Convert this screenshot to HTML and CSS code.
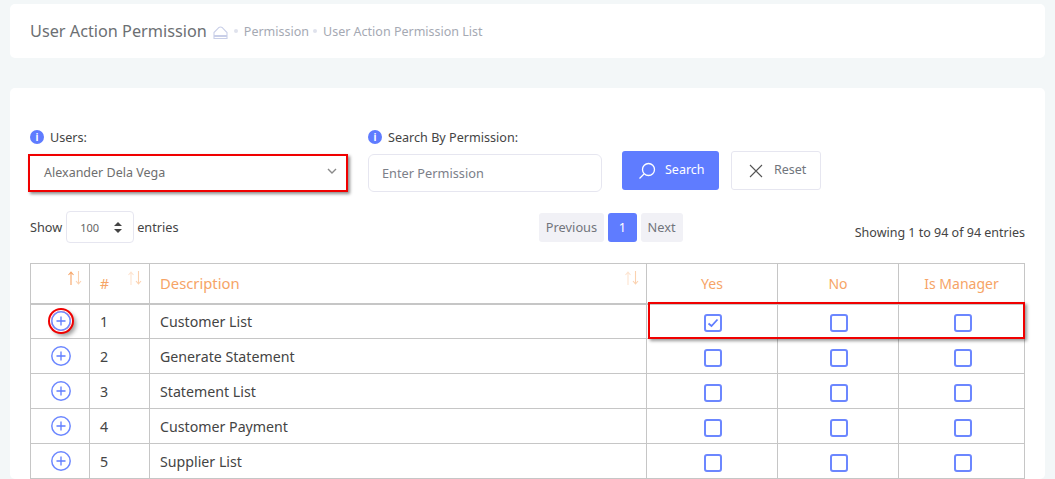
FILE: index.html
```html
<!DOCTYPE html>
<html>
<head>
  <title>User Action Permission</title>
  <link rel="stylesheet" href="styles.css">
</head>
<body>
  <div class="page-title">
    <h1>User Action Permission</h1>
    <svg class="home-icon" width="15" height="13" viewBox="0 0 15 13"><path d="M1 6.5 L5.5 1.8 Q7.5 0.2 9.5 1.8 L14 6.5 V12.5 H1 Z" fill="none" stroke="#c9cfe8" stroke-width="1.1"/><path d="M1 10 H14" stroke="#c9cfe8" stroke-width="2"/></svg>
    <span class="crumb">Permission</span>
    <span class="crumb">User Action Permission List</span>
  </div>

  <div class="card">
    <div class="filters">
      <div class="field field-users">
        <label><span class="info">i</span>Users:</label>
        <div class="select-box marked"><span class="select-text">Alexander Dela Vega</span>
          <svg class="chevron" width="10" height="6" viewBox="0 0 10 6"><path d="M1 1 L5 5 L9 1" fill="none" stroke="#8a8a8a" stroke-width="1.4"/></svg>
        </div>
      </div>
      <div class="field field-search">
        <label><span class="info">i</span>Search By Permission:</label>
        <div class="input-box">Enter Permission</div>
      </div>
      <div class="btn btn-primary">
        <svg width="18" height="18" viewBox="0 0 18 18"><circle cx="10.5" cy="7.5" r="6" fill="none" stroke="#fff" stroke-width="1.3"/><path d="M6 12 L1.5 16.5" stroke="#fff" stroke-width="1.3"/></svg>
        <span class="btn-text">Search</span>
      </div>
      <div class="btn btn-reset">
        <svg width="14" height="14" viewBox="0 0 14 14"><path d="M1 1 L13 13 M13 1 L1 13" stroke="#555" stroke-width="1.1"/></svg>
        <span class="btn-text">Reset</span>
      </div>
    </div>

    <div class="table-top">
      <div class="length">Show <span class="length-select">100
        <svg width="8" height="11" viewBox="0 0 8 11"><path d="M4 0 L8 4 H0 Z M4 11 L0 7 H8 Z" fill="#444"/></svg></span> entries</div>
      <div class="pager">
        <span class="page-btn">Previous</span>
        <span class="page-btn current">1</span>
        <span class="page-btn">Next</span>
      </div>
      <div class="showing">Showing 1 to 94 of 94 entries</div>
    </div>

    <div class="table-wrap">
      <table>
        <thead>
          <tr>
            <th class="col-expand">
              <svg class="sort" width="14" height="14" viewBox="0 0 14 14"><path d="M3 14 V1 M0.5 4 L3 1 L5.500 4" fill="none" stroke="#f6a466" stroke-width="1.1"/><path d="M10.500 0 V13 M8 10 L10.500 13 L13 10" fill="none" stroke="#fbd2b0" stroke-width="1.1"/></svg>
            </th>
            <th class="col-num">#
              <svg class="sort" width="14" height="14" viewBox="0 0 14 14"><path d="M3 14 V1 M0.5 4 L3 1 L5.500 4" fill="none" stroke="#fde4d0" stroke-width="1.1"/><path d="M10.500 0 V13 M8 10 L10.500 13 L13 10" fill="none" stroke="#fbd2b0" stroke-width="1.1"/></svg>
            </th>
            <th class="col-desc">Description
              <svg class="sort" width="14" height="14" viewBox="0 0 14 14"><path d="M3 14 V1 M0.5 4 L3 1 L5.500 4" fill="none" stroke="#fde4d0" stroke-width="1.1"/><path d="M10.500 0 V13 M8 10 L10.500 13 L13 10" fill="none" stroke="#fbd2b0" stroke-width="1.1"/></svg>
            </th>
            <th class="col-check center">Yes</th>
            <th class="col-no center">No</th>
            <th class="center">Is Manager</th>
          </tr>
        </thead>
        <tbody>
          <tr>
            <td class="center"><span class="plus plus-marked"><svg width="20" height="20" viewBox="0 0 20 20"><circle cx="10" cy="10" r="9.2" fill="none" stroke="#6c87ff" stroke-width="1.5"/><path d="M10 5.500 V14.500 M5.500 10 H14.500" stroke="#5f7cff" stroke-width="1.3"/></svg></span></td>
            <td>1</td><td>Customer List</td>
            <td class="center"><span class="check"><svg width="12" height="10" viewBox="0 0 12 10"><path d="M1.500 5.500 L4.500 8 L10.500 1.500" fill="none" stroke="#5f7cff" stroke-width="1.8"/></svg></span></td>
            <td class="center"><span class="check"></span></td>
            <td class="center"><span class="check"></span></td>
          </tr>
          <tr>
            <td class="center"><span class="plus"><svg width="20" height="20" viewBox="0 0 20 20"><circle cx="10" cy="10" r="9.2" fill="none" stroke="#6c87ff" stroke-width="1.5"/><path d="M10 5.500 V14.500 M5.500 10 H14.500" stroke="#5f7cff" stroke-width="1.3"/></svg></span></td>
            <td>2</td><td>Generate Statement</td>
            <td class="center"><span class="check"></span></td>
            <td class="center"><span class="check"></span></td>
            <td class="center"><span class="check"></span></td>
          </tr>
          <tr>
            <td class="center"><span class="plus"><svg width="20" height="20" viewBox="0 0 20 20"><circle cx="10" cy="10" r="9.2" fill="none" stroke="#6c87ff" stroke-width="1.5"/><path d="M10 5.500 V14.500 M5.500 10 H14.500" stroke="#5f7cff" stroke-width="1.3"/></svg></span></td>
            <td>3</td><td>Statement List</td>
            <td class="center"><span class="check"></span></td>
            <td class="center"><span class="check"></span></td>
            <td class="center"><span class="check"></span></td>
          </tr>
          <tr>
            <td class="center"><span class="plus"><svg width="20" height="20" viewBox="0 0 20 20"><circle cx="10" cy="10" r="9.2" fill="none" stroke="#6c87ff" stroke-width="1.5"/><path d="M10 5.500 V14.500 M5.500 10 H14.500" stroke="#5f7cff" stroke-width="1.3"/></svg></span></td>
            <td>4</td><td>Customer Payment</td>
            <td class="center"><span class="check"></span></td>
            <td class="center"><span class="check"></span></td>
            <td class="center"><span class="check"></span></td>
          </tr>
          <tr>
            <td class="center"><span class="plus"><svg width="20" height="20" viewBox="0 0 20 20"><circle cx="10" cy="10" r="9.2" fill="none" stroke="#6c87ff" stroke-width="1.5"/><path d="M10 5.500 V14.500 M5.500 10 H14.500" stroke="#5f7cff" stroke-width="1.3"/></svg></span></td>
            <td>5</td><td>Supplier List</td>
            <td class="center"><span class="check"></span></td>
            <td class="center"><span class="check"></span></td>
            <td class="center"><span class="check"></span></td>
          </tr>
        </tbody>
      </table>
      <div class="row-mark"></div>
    </div>
  </div>
</body>
</html>
```

FILE: styles.css
```css
html, body {
  height: 479px;
  overflow: hidden;
}
body {
  margin: 0;
  padding: 4px 10px 0;
  box-sizing: border-box;
  background-color: #f3f7f8;
  font-family: "Noto Sans", Arial, sans-serif;
  font-size: 13px;
  color: #444;
}
.page-title {
  height: 54px;
  background: #fff;
  border-radius: 5px;
  padding-left: 20px;
  display: flex;
  align-items: center;
}
.page-title h1 {
  margin: 0;
  font-size: 16.25px;
  font-weight: 400;
  color: #6c6f73;
}
.home-icon {
  margin-left: 6px;
  margin-top: 2px;
}
.crumb {
  font-size: 12.500px;
  color: #a5a9b3;
  margin-left: 6px;
  display: flex;
  align-items: center;
}
.crumb::before {
  content: "";
  width: 4px;
  height: 4px;
  border-radius: 50%;
  background: #dfe2ec;
  margin-right: 6px;
}
.crumb + .crumb {
  margin-left: 4px;
}
.card {
  margin-top: 30px;
  background: #fff;
  border-radius: 5px;
  padding: 40px 20px 0;
  height: 391px;
  box-sizing: border-box;
  overflow: hidden;
}
.filters {
  display: flex;
  align-items: flex-start;
}
.field label {
  display: flex;
  align-items: center;
  height: 18px;
  margin-bottom: 8px;
  font-size: 12.6px;
  color: #444;
}
.info {
  width: 14px;
  height: 14px;
  border-radius: 50%;
  background: #5f7cff;
  color: #fff;
  font-size: 10px;
  font-weight: 700;
  line-height: 14px;
  text-align: center;
  margin-right: 6px;
}
.field-users {
  width: 318px;
}
.field-search {
  width: 234px;
  margin-left: 20px;
}
.select-box {
  height: 38px;
  box-sizing: border-box;
  padding-left: 14px;
  display: flex;
  align-items: center;
  justify-content: space-between;
  font-size: 12.5px;
  color: #6e6e6e;
}
.select-text {
  margin-top: -2px;
}
.marked {
  border: 2px solid #f00000;
  box-shadow: 2px 2px 3px rgba(0, 0, 0, 0.45);
  width: 320px;
  margin-left: -2px;
}
.chevron {
  margin-right: 9px;
  margin-top: -4px;
}
.input-box {
  height: 38px;
  box-sizing: border-box;
  border: 1px solid #e6e6f0;
  border-radius: 6px;
  padding-left: 13px;
  display: flex;
  align-items: center;
  font-size: 12.75px;
  color: #7c8089;
}
.btn {
  height: 39px;
  box-sizing: border-box;
  margin-top: 23px;
  border-radius: 3px;
  display: flex;
  align-items: center;
  font-size: 12.5px;
}
.btn-text {
  margin-top: -2px;
}
.btn-primary {
  width: 97px;
  margin-left: 20px;
  padding-left: 16px;
  gap: 9px;
  background-color: #5f7cff;
  color: #fff;
}
.btn-reset {
  width: 90px;
  margin-left: 12px;
  padding-left: 17px;
  gap: 11px;
  background: #fff;
  border: 1px solid #e6e6f0;
  color: #71757c;
}
.table-top {
  display: flex;
  align-items: center;
  margin-top: 19px;
  height: 32px;
}
.length {
  display: flex;
  align-items: center;
  gap: 3px;
  width: 509px;
  font-size: 12.7px;
}
.length-select {
  margin-left: 1px;
  width: 68px;
  height: 32px;
  box-sizing: border-box;
  border: 1px solid #e6e6f0;
  border-radius: 4px;
  display: flex;
  align-items: center;
  justify-content: space-between;
  padding: 0 11px 0 13px;
  font-size: 11px;
  color: #666;
}
.pager {
  display: flex;
  gap: 4px;
  width: 316px;
}
.page-btn {
  height: 29px;
  line-height: 29px;
  padding: 0 7px;
  border-radius: 3px;
  background: #f1f1f6;
  color: #71757c;
  font-size: 12.8px;
}
.page-btn.current {
  padding: 0 10.5px;
  background: #5f7cff;
  color: #fff;
}
.showing {
  white-space: nowrap;
  font-size: 12.5px;
  margin-top: 10px;
  color: #444;
}
.table-wrap {
  position: relative;
  margin-top: 20px;
}
table {
  border-collapse: collapse;
  table-layout: fixed;
  width: 995px;
}
th, td {
  box-sizing: border-box;
  border: 1px solid #c6c6c6;
  padding: 0 0 0 10px;
  height: 35px;
  text-align: left;
  font-size: 14.2px;
  font-weight: 400;
  color: #444;
}
th {
  position: relative;
  height: 40px;
  font-size: 14px;
  color: #f6a466;
  border-bottom-width: 2px;
}
th.col-desc {
  font-size: 14.8px;
}
th.center, td.center {
  text-align: center;
  padding-left: 0;
}
.col-expand { width: 59px; }
.col-num { width: 60px; }
.col-desc { width: 497px; }
.col-check { width: 131px; }
.col-no { width: 121px; }
.sort {
  position: absolute;
  top: 7px;
  right: 7px;
}
.plus {
  display: inline-block;
  width: 20px;
  height: 20px;
  border-radius: 50%;
  vertical-align: middle;
  margin-top: -4px;
  margin-left: 1px;
}
.plus svg {
  display: block;
}
.plus-marked {
  box-shadow: 0 0 0 1px #fff, 0 0 0 3px #f00000, 3px 3px 4px 2px rgba(0, 0, 0, 0.4);
}
.check {
  display: inline-flex;
  align-items: center;
  justify-content: center;
  width: 18px;
  height: 18px;
  box-sizing: border-box;
  border: 2px solid #6c87ff;
  border-radius: 3px;
  vertical-align: middle;
  margin-top: 2px;
  margin-left: 1px;
}
td:last-child .check {
  margin-left: 2px;
}
.row-mark {
  position: absolute;
  left: 618px;
  top: 39px;
  width: 377px;
  height: 37px;
  box-sizing: border-box;
  border: 2px solid #f00000;
  box-shadow: 2px 2px 3px rgba(0, 0, 0, 0.4);
}
```
